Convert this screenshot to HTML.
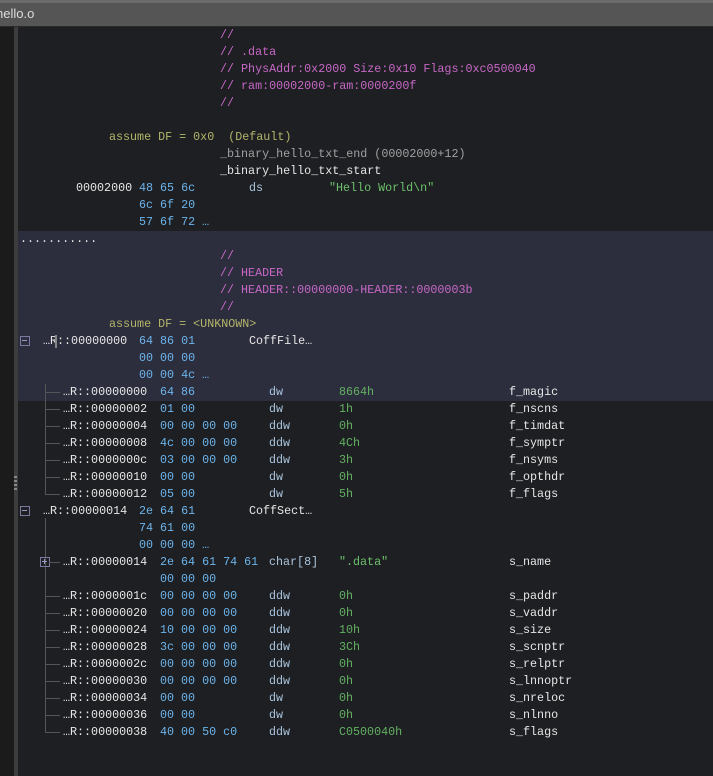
<!DOCTYPE html>
<html><head><style>
body{margin:0;width:713px;height:776px;background:#1e1f22;overflow:hidden;position:relative;font-family:"Liberation Mono",monospace;font-size:11.7px}
.t{position:absolute;height:17px;line-height:17px;white-space:pre}
.c{color:#c768c7}.a{color:#b5b56a}.w{color:#e6e6e6}.b{color:#6cb4ec}.g{color:#a0a0a0}.s{color:#6cc06c}.m{color:#a9c4de}.o{color:#62b062}
.h{position:absolute;background:#555}
.bx{position:absolute;width:8px;height:8px;border:1px solid #7a7aa0}
</style></head><body>
<div style="position:absolute;left:0;top:0;width:713px;height:26px;background:#555;border-bottom:1px solid #2a2a2a"></div>
<div style="position:absolute;left:0;top:0;width:713px;height:3px;background:#6a6a6a"></div>
<div class="t" style="left:-4px;top:5px;color:#dcdcdc;font-family:'Liberation Sans',sans-serif;font-size:13px">hello.o</div>
<div style="position:absolute;left:0;top:27px;width:14px;height:749px;background:#1b1b1b"></div>
<div style="position:absolute;left:14px;top:27px;width:4px;height:749px;background:#3d3d3d"></div>
<div style="position:absolute;left:18px;top:231px;width:695px;height:170px;background:#2d2e3d"></div>
<div style="position:absolute;left:14px;top:476px;width:3px;height:16px;background:repeating-linear-gradient(#888 0 2px,transparent 2px 4px)"></div>

<div class="t c" style="left:220px;top:27px">//</div>
<div class="t c" style="left:220px;top:44px">// .data</div>
<div class="t c" style="left:220px;top:61px">// PhysAddr:0x2000 Size:0x10 Flags:0xc0500040</div>
<div class="t c" style="left:220px;top:78px">// ram:00002000-ram:0000200f</div>
<div class="t c" style="left:220px;top:95px">//</div>
<div class="t a" style="left:109px;top:129px">assume DF = 0x0  (Default)</div>
<div class="t g" style="left:220px;top:146px">_binary_hello_txt_end (00002000+12)</div>
<div class="t w" style="left:220px;top:163px">_binary_hello_txt_start</div>
<div class="t w" style="left:76px;top:180px">00002000</div>
<div class="t b" style="left:139px;top:180px">48 65 6c</div><div class="t m" style="left:249px;top:180px">ds</div><div class="t s" style="left:329px;top:180px">"Hello World\n"</div>
<div class="t b" style="left:139px;top:197px">6c 6f 20</div>
<div class="t b" style="left:139px;top:214px">57 6f 72 …</div>
<div class="t w" style="left:20px;top:231px">...........</div>
<div class="t c" style="left:220px;top:248px">//</div>
<div class="t c" style="left:220px;top:265px">// HEADER</div>
<div class="t c" style="left:220px;top:282px">// HEADER::00000000-HEADER::0000003b</div>
<div class="t c" style="left:220px;top:299px">//</div>
<div class="t a" style="left:109px;top:316px">assume DF = &lt;UNKNOWN&gt;</div>

<div class="bx" style="left:20px;top:336px"></div><div style="position:absolute;left:22px;top:340px;width:5px;height:1px;background:#9a9ac0"></div>
<div class="t w" style="left:43px;top:333px">…R::00000000</div><div class="t b" style="left:139px;top:333px">64 86 01</div><div class="t w" style="left:249px;top:333px">CoffFile…</div>
<div class="t b" style="left:139px;top:350px">00 00 00</div>
<div class="t b" style="left:139px;top:367px">00 00 4c …</div>
<div style="position:absolute;left:55px;top:335px;width:2px;height:13px;background:#888"></div>

<div class="bx" style="left:20px;top:506px"></div><div style="position:absolute;left:22px;top:510px;width:5px;height:1px;background:#9a9ac0"></div>

<div class="h" style="left:45px;top:384px;width:1px;height:110px"></div>
<div class="h" style="left:45px;top:518px;width:1px;height:215px"></div>

<div class="bx" style="left:40px;top:557px"></div><div style="position:absolute;left:42px;top:561px;width:5px;height:1px;background:#9a9ac0"></div><div style="position:absolute;left:44px;top:559px;width:1px;height:5px;background:#9a9ac0"></div>

<div class="t w" style="left:43px;top:503px">…R::00000014</div><div class="t b" style="left:139px;top:503px">2e 64 61</div><div class="t w" style="left:249px;top:503px">CoffSect…</div>
<div class="t b" style="left:139px;top:520px">74 61 00</div>
<div class="t b" style="left:139px;top:537px">00 00 00 …</div>

<div class="h" style="left:45px;top:392px;width:15px;height:1px"></div>
<div class="h" style="left:45px;top:409px;width:15px;height:1px"></div>
<div class="h" style="left:45px;top:426px;width:15px;height:1px"></div>
<div class="h" style="left:45px;top:443px;width:15px;height:1px"></div>
<div class="h" style="left:45px;top:460px;width:15px;height:1px"></div>
<div class="h" style="left:45px;top:477px;width:15px;height:1px"></div>
<div class="h" style="left:45px;top:494px;width:15px;height:1px"></div>
<div class="h" style="left:49px;top:562px;width:11px;height:1px"></div>
<div class="h" style="left:45px;top:596px;width:15px;height:1px"></div>
<div class="h" style="left:45px;top:613px;width:15px;height:1px"></div>
<div class="h" style="left:45px;top:630px;width:15px;height:1px"></div>
<div class="h" style="left:45px;top:647px;width:15px;height:1px"></div>
<div class="h" style="left:45px;top:664px;width:15px;height:1px"></div>
<div class="h" style="left:45px;top:681px;width:15px;height:1px"></div>
<div class="h" style="left:45px;top:698px;width:15px;height:1px"></div>
<div class="h" style="left:45px;top:715px;width:15px;height:1px"></div>
<div class="h" style="left:45px;top:732px;width:15px;height:1px"></div>

<div class="t w" style="left:63px;top:384px">…R::00000000</div><div class="t b" style="left:160px;top:384px">64 86</div><div class="t m" style="left:269px;top:384px">dw</div><div class="t o" style="left:339px;top:384px">8664h</div><div class="t w" style="left:509px;top:384px">f_magic</div>
<div class="t w" style="left:63px;top:401px">…R::00000002</div><div class="t b" style="left:160px;top:401px">01 00</div><div class="t m" style="left:269px;top:401px">dw</div><div class="t o" style="left:339px;top:401px">1h</div><div class="t w" style="left:509px;top:401px">f_nscns</div>
<div class="t w" style="left:63px;top:418px">…R::00000004</div><div class="t b" style="left:160px;top:418px">00 00 00 00</div><div class="t m" style="left:269px;top:418px">ddw</div><div class="t o" style="left:339px;top:418px">0h</div><div class="t w" style="left:509px;top:418px">f_timdat</div>
<div class="t w" style="left:63px;top:435px">…R::00000008</div><div class="t b" style="left:160px;top:435px">4c 00 00 00</div><div class="t m" style="left:269px;top:435px">ddw</div><div class="t o" style="left:339px;top:435px">4Ch</div><div class="t w" style="left:509px;top:435px">f_symptr</div>
<div class="t w" style="left:63px;top:452px">…R::0000000c</div><div class="t b" style="left:160px;top:452px">03 00 00 00</div><div class="t m" style="left:269px;top:452px">ddw</div><div class="t o" style="left:339px;top:452px">3h</div><div class="t w" style="left:509px;top:452px">f_nsyms</div>
<div class="t w" style="left:63px;top:469px">…R::00000010</div><div class="t b" style="left:160px;top:469px">00 00</div><div class="t m" style="left:269px;top:469px">dw</div><div class="t o" style="left:339px;top:469px">0h</div><div class="t w" style="left:509px;top:469px">f_opthdr</div>
<div class="t w" style="left:63px;top:486px">…R::00000012</div><div class="t b" style="left:160px;top:486px">05 00</div><div class="t m" style="left:269px;top:486px">dw</div><div class="t o" style="left:339px;top:486px">5h</div><div class="t w" style="left:509px;top:486px">f_flags</div>

<div class="t w" style="left:63px;top:554px">…R::00000014</div><div class="t b" style="left:160px;top:554px">2e 64 61 74 61</div><div class="t m" style="left:269px;top:554px">char[8]</div><div class="t s" style="left:339px;top:554px">".data"</div><div class="t w" style="left:509px;top:554px">s_name</div>
<div class="t b" style="left:160px;top:571px">00 00 00</div>
<div class="t w" style="left:63px;top:588px">…R::0000001c</div><div class="t b" style="left:160px;top:588px">00 00 00 00</div><div class="t m" style="left:269px;top:588px">ddw</div><div class="t o" style="left:339px;top:588px">0h</div><div class="t w" style="left:509px;top:588px">s_paddr</div>
<div class="t w" style="left:63px;top:605px">…R::00000020</div><div class="t b" style="left:160px;top:605px">00 00 00 00</div><div class="t m" style="left:269px;top:605px">ddw</div><div class="t o" style="left:339px;top:605px">0h</div><div class="t w" style="left:509px;top:605px">s_vaddr</div>
<div class="t w" style="left:63px;top:622px">…R::00000024</div><div class="t b" style="left:160px;top:622px">10 00 00 00</div><div class="t m" style="left:269px;top:622px">ddw</div><div class="t o" style="left:339px;top:622px">10h</div><div class="t w" style="left:509px;top:622px">s_size</div>
<div class="t w" style="left:63px;top:639px">…R::00000028</div><div class="t b" style="left:160px;top:639px">3c 00 00 00</div><div class="t m" style="left:269px;top:639px">ddw</div><div class="t o" style="left:339px;top:639px">3Ch</div><div class="t w" style="left:509px;top:639px">s_scnptr</div>
<div class="t w" style="left:63px;top:656px">…R::0000002c</div><div class="t b" style="left:160px;top:656px">00 00 00 00</div><div class="t m" style="left:269px;top:656px">ddw</div><div class="t o" style="left:339px;top:656px">0h</div><div class="t w" style="left:509px;top:656px">s_relptr</div>
<div class="t w" style="left:63px;top:673px">…R::00000030</div><div class="t b" style="left:160px;top:673px">00 00 00 00</div><div class="t m" style="left:269px;top:673px">ddw</div><div class="t o" style="left:339px;top:673px">0h</div><div class="t w" style="left:509px;top:673px">s_lnnoptr</div>
<div class="t w" style="left:63px;top:690px">…R::00000034</div><div class="t b" style="left:160px;top:690px">00 00</div><div class="t m" style="left:269px;top:690px">dw</div><div class="t o" style="left:339px;top:690px">0h</div><div class="t w" style="left:509px;top:690px">s_nreloc</div>
<div class="t w" style="left:63px;top:707px">…R::00000036</div><div class="t b" style="left:160px;top:707px">00 00</div><div class="t m" style="left:269px;top:707px">dw</div><div class="t o" style="left:339px;top:707px">0h</div><div class="t w" style="left:509px;top:707px">s_nlnno</div>
<div class="t w" style="left:63px;top:724px">…R::00000038</div><div class="t b" style="left:160px;top:724px">40 00 50 c0</div><div class="t m" style="left:269px;top:724px">ddw</div><div class="t o" style="left:339px;top:724px">C0500040h</div><div class="t w" style="left:509px;top:724px">s_flags</div>
</body></html>
